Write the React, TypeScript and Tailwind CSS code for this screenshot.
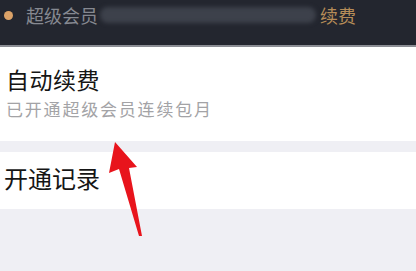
export default function App() {
  const cjk = { fontFamily: '"Noto Sans CJK SC", "Noto Sans", sans-serif' };
  return (
    <div className="w-[416px] h-[271px] bg-[#efeff4] overflow-hidden relative" style={cjk}>
      <div className="h-[47px] bg-[#23262f] flex items-center pb-[15px] border-b-[2px] border-[#8b8d94]">
        <div className="w-[9px] h-[9px] rounded-full bg-[#dba268] ml-[4px] shrink-0" />
        <span className="text-[18px] leading-[22px] text-[#868991] ml-[13px] whitespace-nowrap">超级会员</span>
        <div className="w-[216px] h-[16px] rounded-[8px] bg-[#3d414b] blur-[2px] ml-[2px] shrink-0" />
        <span className="text-[18px] leading-[22px] text-[#b58c58] ml-[4px] whitespace-nowrap">续费</span>
      </div>
      <div className="bg-white h-[94px] px-[6px] pt-[17px]">
        <div className="text-[23px] leading-[30px] text-[#151515] tracking-[0.5px] whitespace-nowrap">自动续费</div>
        <div className="text-[17px] leading-[22px] text-[#a3a3a6] tracking-[1.8px] mt-[4px] whitespace-nowrap">已开通超级会员连续包月</div>
      </div>
      <div className="h-[11px]" />
      <div className="bg-white h-[57px] px-[4px] pt-[11px]">
        <span className="text-[24px] leading-[30px] text-[#151515] whitespace-nowrap">开通记录</span>
      </div>
      <svg className="absolute left-0 top-0" width="416" height="271" viewBox="0 0 416 271">
        <path d="M115 142 L137 167 L129 168 L142 236 L139 236 L119 169 L109 173 Z" fill="#e8141c" />
      </svg>
    </div>
  );
}
